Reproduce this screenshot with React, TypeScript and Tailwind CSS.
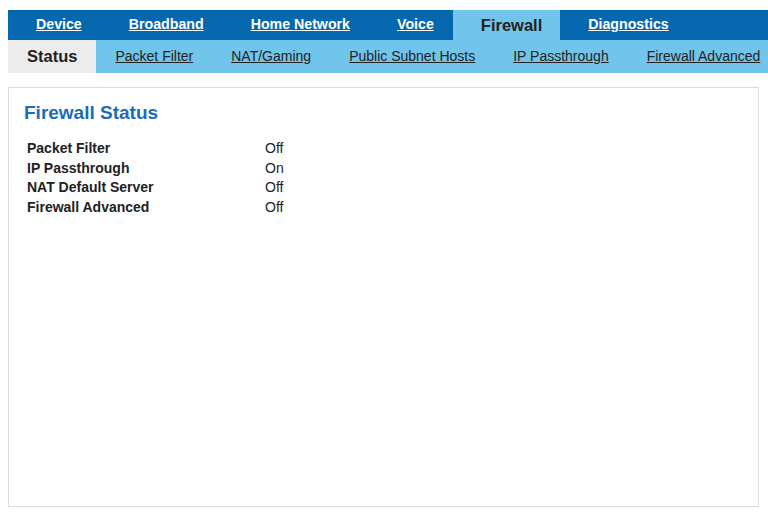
const topTabs = ["Device", "Broadband", "Home Network", "Voice", "Firewall", "Diagnostics"];
const subTabs = ["Status", "Packet Filter", "NAT/Gaming", "Public Subnet Hosts", "IP Passthrough", "Firewall Advanced"];

const rows: [string, string][] = [
  ["Packet Filter", "Off"],
  ["IP Passthrough", "On"],
  ["NAT Default Server", "Off"],
  ["Firewall Advanced", "Off"],
];

export default function App() {
  const active = "Firewall";
  const activeSub = "Status";

  return (
    <div
      className="min-h-screen bg-white pt-[10px] pl-2 text-[#222]"
      style={{ fontFamily: '"Liberation Sans", Arial, sans-serif' }}
    >
      <ul className="flex h-[30px] bg-[#0567ad] whitespace-nowrap">
        {topTabs.map((tab) =>
          tab === active ? (
            <li key={tab} className="flex items-center bg-[#72c5ea] pl-[28px] pr-[18px] text-[16.5px] font-bold text-[#222]">
              {tab}
            </li>
          ) : (
            <li key={tab} className="flex items-center pl-[28px] pr-[19px]">
              <a href="#" className="text-[14.2px] font-bold text-white underline">
                {tab}
              </a>
            </li>
          )
        )}
      </ul>
      <ul className="flex h-[33px] bg-[#72c5ea] whitespace-nowrap">
        {subTabs.map((tab) =>
          tab === activeSub ? (
            <li key={tab} className="flex items-center bg-[#ececec] px-[19px] text-[16.5px] font-bold text-[#222]">
              {tab}
            </li>
          ) : (
            <li key={tab} className="flex items-center px-[19px]">
              <a href="#" className="text-[14px] text-[#222] underline">
                {tab}
              </a>
            </li>
          )
        )}
      </ul>

      <div className="mt-[14px] mr-[9px] h-[420px] border border-[#dcdcdc] px-[15px] pt-[13px]">
        <h1 className="text-[19px] leading-[24px] font-bold text-[#1a6db3]">Firewall Status</h1>
        <table className="mt-[14px] ml-[3px] text-[14px] leading-[19.5px]">
          <tbody>
            {rows.map(([label, value]) => (
              <tr key={label}>
                <td className="w-[238px] p-0 font-bold">{label}</td>
                <td className="p-0">{value}</td>
              </tr>
            ))}
          </tbody>
        </table>
      </div>
    </div>
  );
}
